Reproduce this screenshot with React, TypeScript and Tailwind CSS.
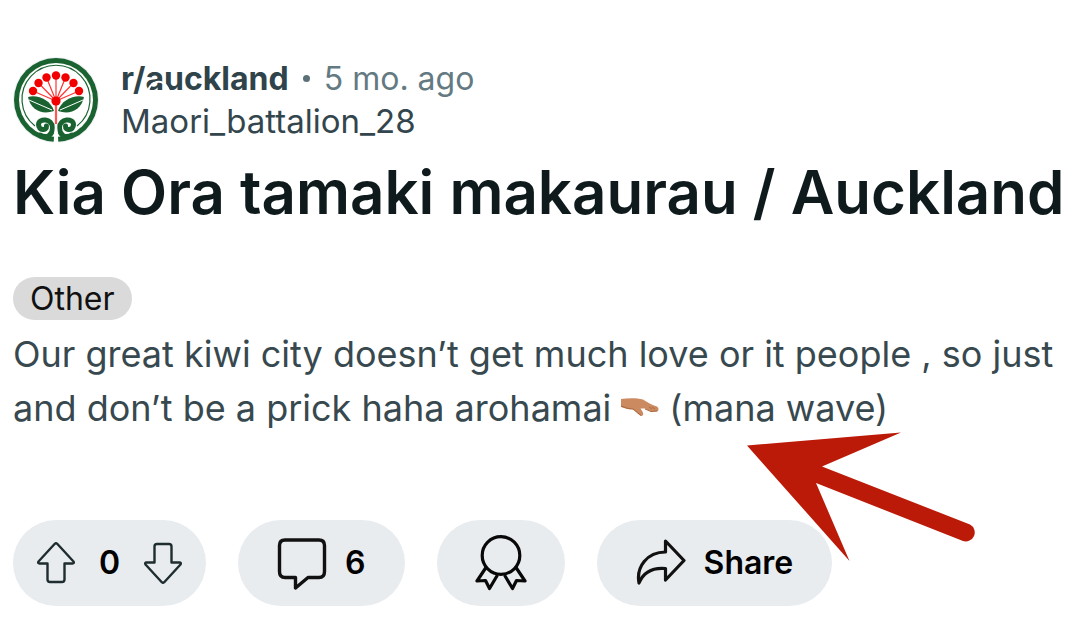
import { ReactNode } from 'react'

function Avatar() {
  const berries = [
    [33, 46], [38.5, 38], [46.5, 32.5], [56, 30.5], [65.5, 32.5], [73.5, 38], [79, 46],
  ]
  const scroll = 'M40 90C47 94 52.500 90 52.500 83C52.500 73 38.500 73 38.500 79.500C38.500 86 47 86 46.500 81'
  return (
    <svg viewBox="13 12 86 86" className="size-[86px] shrink-0" role="img" aria-label="r/auckland">
      <circle cx="56" cy="55" r="43" fill="#eef0f5" />
      <circle cx="56" cy="55" r="42" fill="#1a6330" />
      <circle cx="56" cy="55" r="37" fill="#fff" />
      <path d="M35 81A34 34 0 1 1 77 81" fill="none" stroke="#1a6330" strokeWidth="1.2" />
      {berries.map(([x, y]) => (
        <g key={x}>
          <line x1={x} y1={y} x2="56" y2="56" stroke="#f33" strokeWidth="1.2" />
          <circle cx={x} cy={y} r="4.2" fill="#f20000" />
        </g>
      ))}
      <path d="M56 56V79" stroke="#f55" strokeWidth="2.2" />
      <circle cx="56" cy="56" r="4.6" fill="#f20000" />
      <path d="M28 52C37 49 51 55 54 66C43 70 31 66 28 52Z" fill="#1a6330" />
      <path d="M84 52C75 49 61 55 58 66C69 70 81 66 84 52Z" fill="#1a6330" />
      <path d="M29 55L52 65M83 55L60 65" stroke="#fff" strokeWidth="1" />
      <path d={scroll} fill="none" stroke="#1a6330" strokeWidth="5" strokeLinecap="round" />
      <path d={scroll} transform="matrix(-1 0 0 1 112 0)" fill="none" stroke="#1a6330" strokeWidth="5" strokeLinecap="round" />
      <path d="M55 79H57L58.500 99H53.500Z" fill="#fff" />
    </svg>
  )
}

function WaveHand() {
  return (
    <svg viewBox="0 0 38 19" className="mx-2.5 inline-block h-[19px] w-[38px] align-[4px]" role="img" aria-label="palm down hand">
      <path
        d="M0 1C7 0 16 0 22 1.500C26 4 31 7 36 8.500C38 10 38 13 36 13.500L30 13.500L24 10.500L19.500 10.500C21 13 24 16 21 18C18 18 15 13 11 11C7 12 4 10 0 9Z"
        fill="#cc8a60"
      />
      <path d="M0 8C5 10 8 11 12 11L20 17.500M24 11L30 13.500L36 13" fill="none" stroke="#a9673f" strokeWidth="1" />
      <path d="M28 9L31 11M31 9L34 11" stroke="#ad6c45" strokeWidth="1" />
    </svg>
  )
}

function Arrow() {
  return (
    <svg
      viewBox="745 430 233 132"
      className="pointer-events-none absolute top-[430px] left-[745px] h-[132px] w-[233px]"
      aria-hidden="true"
    >
      <path
        d="M747 445.500L901 432.500L822 466.500L970 524.500A9 9 0 0 1 963 541L816 483L849.500 561Z"
        fill="#bb1a08"
      />
    </svg>
  )
}

function Pill({ children, className }: { children: ReactNode; className: string }) {
  return (
    <div className={`flex h-[86px] items-center rounded-full bg-[#e8ecef] text-[32px] font-semibold text-black ${className}`}>
      {children}
    </div>
  )
}

function VoteIcon({ down = false }: { down?: boolean }) {
  return (
    <svg
      viewBox="0 0 40 44"
      className={down ? 'h-11 w-10 rotate-180' : 'h-11 w-10'}
      fill="none"
      stroke="#1f2d30"
      strokeWidth="2.400"
      strokeLinejoin="round"
    >
      <path d="M18.800 2.800Q20 1.600 21.200 2.800L37.500 20.500Q38.500 22.500 36.500 22.500H28.500V38.500Q28.500 41 26 41H14Q11.500 41 11.500 38.500V22.500H3.500Q1.500 22.500 2.500 20.500Z" />
    </svg>
  )
}

function CommentIcon() {
  return (
    <svg viewBox="0 0 50 54" className="h-[54px] w-[50px]" fill="none" stroke="#111" strokeWidth="3.400" strokeLinejoin="round">
      <path d="M8 4H42Q47.500 4 47.500 9.500V35.500Q47.500 41.500 42 41.500H31L18.500 52V41.500H8Q2.500 41.500 2.500 35.500V9.500Q2.500 4 8 4Z" />
    </svg>
  )
}

function AwardIcon() {
  return (
    <svg viewBox="0 0 52 56" className="h-14 w-[52px]" fill="none" stroke="#080808" strokeWidth="3.200" strokeLinejoin="round">
      <circle cx="26" cy="20.500" r="18.800" />
      <path d="M11 32.500L2 46L10.500 45.500L14.500 53.500L22.500 40" />
      <path d="M41 32.500L50 46L41.500 45.500L37.500 53.500L29.500 40" />
    </svg>
  )
}

function ShareIcon() {
  return (
    <svg viewBox="0 0 50 48" className="h-12 w-[50px]" fill="none" stroke="#111" strokeWidth="3.200" strokeLinejoin="round">
      <path d="M29.500 2L48 21.500L29.500 41V29.500C18 28.500 8 32 3 44C0 28 11 13 29.500 13Z" />
    </svg>
  )
}

export default function App() {
  return (
    <main className="relative min-h-screen overflow-hidden bg-white px-[13px] pt-[55px] font-['Inter','Liberation_Sans',sans-serif] whitespace-nowrap">
      <header className="flex items-end gap-[22px]">
        <Avatar />
        <div className="text-[32px] leading-[43px] text-[#33464d]">
          <div className="flex items-center gap-[14px] pt-0.5">
            <a href="#auckland" className="relative font-bold text-[#2f434b]">
              r/auckland
              <svg viewBox="0 0 24 12" className="absolute top-[23px] left-[26px] h-3 w-6" fill="none" aria-hidden="true">
                <path d="M1 11C3 3 11 0 16 3C20 5 21 8 22 11" stroke="#fff" strokeWidth="2" />
              </svg>
            </a>
            <span className="size-[7px] rounded-full bg-[#5c7078]" />
            <time className="text-[#647a82]">5 mo. ago</time>
          </div>
          <a href="#user" className="block text-[33px]">Maori_battalion_28</a>
        </div>
      </header>

      <h1 className="mt-[11px] text-[60px] leading-[76px] font-semibold text-[#0f1a1c]">
        Kia Ora tamaki makaurau / Auckland
      </h1>

      <div className="mt-[47px] flex">
        <span className="rounded-full bg-[#dadada] px-[17px] text-[32px] leading-[43px] text-[#111]">Other</span>
      </div>

      <p className="mt-[7px] text-[36px] leading-[54px] text-[#37494f]">
        Our great kiwi city doesn’t get much love or it people , so just
        <br />
        and don’t be a prick haha arohamai
        <WaveHand />
        (mana wave)
      </p>

      <div className="mt-[85px] flex gap-8">
        <Pill className="gap-[23px] px-[23px]">
          <button type="button" aria-label="Upvote"><VoteIcon /></button>
          <span>0</span>
          <button type="button" aria-label="Downvote"><VoteIcon down /></button>
        </Pill>
        <button type="button" aria-label="6 comments">
          <Pill className="gap-[18px] px-[39px]">
            <CommentIcon />
            <span>6</span>
          </Pill>
        </button>
        <button type="button" aria-label="Award">
          <Pill className="px-[38px]">
            <AwardIcon />
          </Pill>
        </button>
        <button type="button">
          <Pill className="gap-[18px] px-[39px]">
            <ShareIcon />
            <span>Share</span>
          </Pill>
        </button>
      </div>

      <Arrow />
    </main>
  )
}
